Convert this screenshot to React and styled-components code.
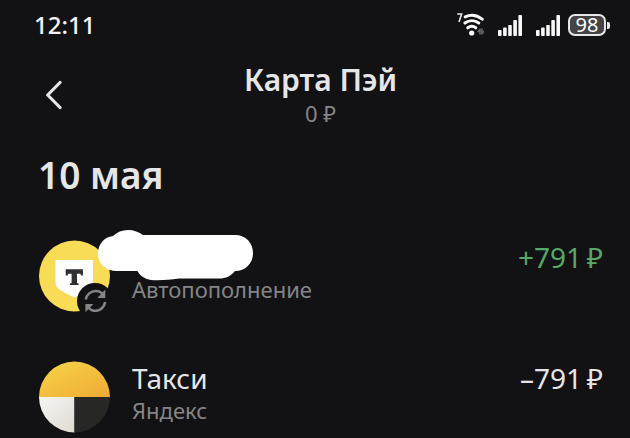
import styled, { createGlobalStyle } from "styled-components";

const operations = [
    { id: 1, title: "", note: "Автопополнение", amount: "+791\u2009₽", income: true, logo: "bank", hidden: true },
    { id: 2, title: "Такси", note: "Яндекс", amount: "–791\u2009₽", income: false, logo: "taxi", hidden: false },
];

const WifiIcon = () => (
    <svg width="28" height="26" viewBox="0 0 28 26" fill="none" aria-hidden="true">
        <path d="M1.2 2h4.4L3 10" stroke="#e8e8e8" strokeWidth="1.6" />
        <g stroke="#fafafa" strokeWidth="3" strokeLinecap="round">
            <path d="M9.2 4.9C14.5 2.4 21 3 26.2 7.2" />
            <path d="M8.9 11C13 7.9 18.6 7.9 22.8 11" />
            <path d="M11.8 15.8C14.2 14 17.4 14 19.8 15.8" />
        </g>
        <circle cx="15.7" cy="21" r="2.6" fill="#fafafa" />
        <g stroke="#6b6b6d" strokeWidth="1.5">
            <path d="M24 22.6v-6.2M24 17l-2.2 3.2" />
            <path d="M26 16.4v6.200M26 22l2-3" />
        </g>
    </svg>
);

const SignalIcon = () => (
    <svg width="24" height="21" viewBox="0 0 24 21" fill="#f7f7f7" aria-hidden="true">
        <rect x="0" y="15" width="3.6" height="6" rx="0.8" />
        <rect x="5.1" y="12.6" width="3.6" height="8.4" rx="0.8" />
        <rect x="10.2" y="10" width="3.6" height="11" rx="0.8" />
        <rect x="15.3" y="5" width="3.6" height="16" rx="0.8" />
        <rect x="20.4" y="0" width="3.6" height="21" rx="0.8" />
    </svg>
);

const BankLogo = () => (
    <svg width="72" height="72" viewBox="0 0 72 72" aria-hidden="true">
        <circle cx="36.5" cy="36" r="35.5" fill="#f9dc55" />
        <path d="M17.5 20H55v21.5c0 6-3 9.5-7.5 11.8L36.3 57.5 25 51.8C20 49.2 17.5 46.5 17.5 41.5z" fill="#fff" />
        <path d="M27.7 29.3h17.2v6.200h-1.800l-.7-1.800H39v9.200l1.600.6v1.500h-8.600v-1.500l1.600-.6v-9.200h-3.400l-.7 1.800h-1.800z" fill="#303034" />
        <circle cx="57" cy="61" r="18" fill="#121214" />
        <g fill="none" stroke="#858587" strokeWidth="2.6">
            <path d="M47.8 59.5c.8-5 5-8.500 10-8.500 3.200 0 6 1.500 7.500 4" />
            <path d="M67.200 62c-.8 5-4.800 8.800-9.700 8.800-3.200 0-6-1.600-7.700-4.200" />
        </g>
        <path d="M67.300 49.600v8.400h-8z" fill="#858587" />
        <path d="M47.400 72.200v-8.200h8z" fill="#858587" />
    </svg>
);

const TaxiLogo = () => (
    <svg width="72" height="72" viewBox="0 0 72 72" aria-hidden="true">
        <defs>
            <linearGradient id="taxiTop" x1="0" y1="0" x2="1" y2="1">
                <stop offset="0" stopColor="#f7d548" />
                <stop offset="1" stopColor="#efaa34" />
            </linearGradient>
            <linearGradient id="taxiLight" x1="0" y1="0" x2="1" y2="1">
                <stop offset="0" stopColor="#f6f5f2" />
                <stop offset="1" stopColor="#dedbd3" />
            </linearGradient>
        </defs>
        <path d="M1 36a35.5 35.5 0 0 1 71 0z" fill="url(#taxiTop)" />
        <path d="M1 36a35.5 35.5 0 0 0 35.5 35.5V36z" fill="url(#taxiLight)" />
        <path d="M36.5 36v35.5A35.5 35.5 0 0 0 72 36z" fill="#272726" />
    </svg>
);

const App = () => {

    return (
        <>
            <GlobalStyle />
            <StatusBar>
                <Clock>12:11</Clock>
                <StatusIcons>
                    <WifiIcon />
                    <SignalIcon />
                    <SignalIcon />
                    <Battery>
                        <BatteryBody>98</BatteryBody>
                        <BatteryTip />
                    </Battery>
                </StatusIcons>
            </StatusBar>
            <Header>
                <BackButton type="button" aria-label="Назад">
                    <svg width="18" height="30" viewBox="0 0 18 30" fill="none" aria-hidden="true">
                        <path d="M16 2.500L3.700 15 16 27.500" stroke="#e6e6e8" strokeWidth="3.2" strokeLinecap="round" strokeLinejoin="round" />
                    </svg>
                </BackButton>
                <HeaderText>
                    <Title>Карта Пэй</Title>
                    <Balance>0 ₽</Balance>
                </HeaderText>
            </Header>
            <Main>
                <DayTitle>10 мая</DayTitle>
                <List>
                    {operations.map((item) => (
                        <Row key={item.id}>
                            {item.logo === "bank" ? <BankLogo /> : <TaxiLogo />}
                            <Info>
                                <Name>{item.title}</Name>
                                <Note>{item.note}</Note>
                                {item.hidden && (
                                    <Cover width="157" height="52" viewBox="0 0 157 52" aria-hidden="true">
                                        <path d="M1 25C1 15 7 8 16 7 20 3 25 1 31 1c6 0 11 2 15 5h92c11 0 18 8 18 18s-7 18-18 18c-4 5-9 7.500-16 7.500H82C72 51 62 51.500 54 51c-6-1-11-4-13.500-9H20C9 42 1 35 1 25z" fill="#fff" />
                                    </Cover>
                                )}
                            </Info>
                            <Amount $income={item.income}>{item.amount}</Amount>
                        </Row>
                    ))}
                </List>
            </Main>
        </>
    );
}

export default App;

const GlobalStyle = createGlobalStyle`
    * {
        box-sizing: border-box;
    }
    body {
        margin: 0;
        background: #121214;
        color: #e6e6e8;
        font-family: "Noto Sans", "Open Sans", sans-serif;
    }
    svg {
        display: block;
        flex: none;
    }
`;

const StatusBar = styled.div`
    display: flex;
    align-items: center;
    justify-content: space-between;
    padding: 8px 20px 0 34px;
`;

const Clock = styled.time`
    font-size: 24px;
    font-weight: 500;
    line-height: 34px;
    color: #f7f7f7;
`;

const StatusIcons = styled.div`
    display: flex;
    align-items: center;
    gap: 14px;
`;

const Battery = styled.div`
    display: flex;
    align-items: center;
    gap: 1px;
    margin-left: -6px;
`;

const BatteryBody = styled.span`
    width: 38px;
    height: 22px;
    border: 2px solid #e8e8e8;
    border-radius: 7px;
    background: #444446;
    color: #fff;
    font-size: 20px;
    line-height: 18px;
    text-align: center;
`;

const BatteryTip = styled.span`
    width: 3px;
    height: 7px;
    border-radius: 0 2px 2px 0;
    background: #e8e8e8;
`;

const Header = styled.header`
    display: grid;
    grid-template-columns: 48px 1fr 48px;
    align-items: center;
    padding: 20px 27px 0 38px;
`;

const BackButton = styled.button`
    display: flex;
    padding: 8px 6px;
    border: 0;
    background: none;
    cursor: pointer;
`;

const HeaderText = styled.div`
    text-align: center;
`;

const Title = styled.h1`
    margin: 0;
    font-size: 30px;
    font-weight: 600;
    line-height: 36px;
`;

const Balance = styled.div`
    font-size: 22px;
    line-height: 30px;
    color: #858587;
`;

const Main = styled.main`
    padding: 23px 27px 4px 38px;
`;

const DayTitle = styled.h2`
    margin: 0 0 41px;
    font-size: 37px;
    font-weight: 600;
    line-height: 48px;
`;

const List = styled.ul`
    display: flex;
    flex-direction: column;
    gap: 49px;
    margin: 0;
    padding: 0;
    list-style: none;
`;

const Row = styled.li`
    display: flex;
    gap: 22px;
`;

const Info = styled.div`
    position: relative;
    flex: 1;
`;

const Name = styled.div`
    min-height: 34px;
    font-size: 28px;
    line-height: 34px;
`;

const Note = styled.div`
    font-size: 22px;
    line-height: 30px;
    color: #858587;
`;

const Cover = styled.svg`
    position: absolute;
    top: -11px;
    left: -35px;
`;

const Amount = styled.div`
    font-size: 28px;
    line-height: 34px;
    white-space: nowrap;
    color: ${({ $income }) => ($income ? "#57a866" : "#e6e6e8")};
`;
